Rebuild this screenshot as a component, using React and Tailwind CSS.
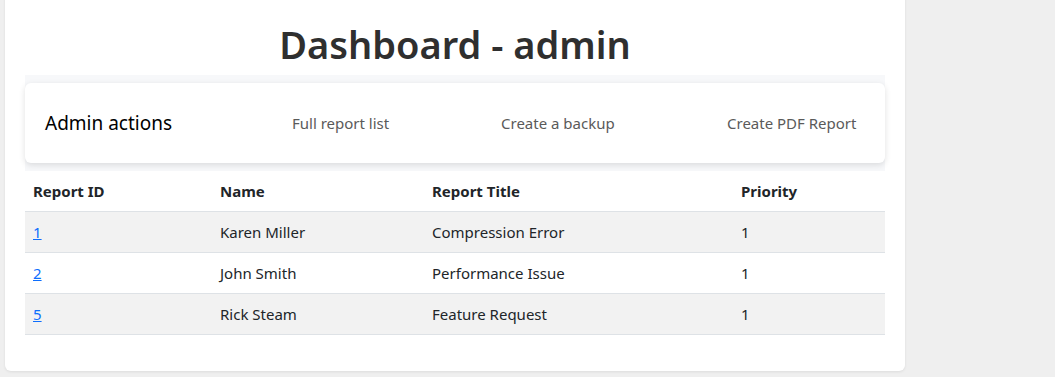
const rows = [
  { id: 1, name: 'Karen Miller', title: 'Compression Error', priority: 1 },
  { id: 2, name: 'John Smith', title: 'Performance Issue', priority: 1 },
  { id: 5, name: 'Rick Steam', title: 'Feature Request', priority: 1 },
]

export default function App() {
  return (
    <div
      className="min-h-[385px] bg-[#efefef] pl-[5px]"
      style={{ fontFamily: '"Noto Sans", "Open Sans", sans-serif' }}
    >
      <div className="-mt-2 w-[900px] rounded-md bg-white px-5 pt-[30px] pb-[36px] text-[#212529] shadow-[0_1px_3px_rgba(0,0,0,0.08)]">
        <h1 className="mb-2 text-center text-[38px] leading-[45px] font-semibold text-[#2f2f2f]">
          Dashboard - admin
        </h1>

        <div className="bg-[#f7f8fa] py-2">
          <div className="flex h-20 items-center rounded-md bg-white pl-5 shadow-[0_2px_6px_rgba(0,0,0,0.12)]">
            <span className="w-[247px] text-[19px] text-black">Admin actions</span>
            <a className="w-[209px] text-[15px] text-[#5a5a5a]">Full report list</a>
            <a className="w-[226px] text-[15px] text-[#5a5a5a]">Create a backup</a>
            <a className="text-[15px] text-[#5a5a5a]">Create PDF Report</a>
          </div>
        </div>

        <table className="w-full border-collapse text-[15px] leading-6">
          <thead>
            <tr className="border-b border-[#dee2e6]">
              <th className="w-[187px] px-2 py-2 text-left font-bold">Report ID</th>
              <th className="w-[212px] px-2 py-2 text-left font-bold">Name</th>
              <th className="w-[309px] px-2 py-2 text-left font-bold">Report Title</th>
              <th className="px-2 py-2 text-left font-bold">Priority</th>
            </tr>
          </thead>
          <tbody>
            {rows.map((r, i) => (
              <tr
                key={r.id}
                className={`border-b border-[#dee2e6] ${i % 2 === 0 ? 'bg-[#f2f2f2]' : 'bg-white'}`}
              >
                <td className="px-2 py-2">
                  <a href="#" className="text-[#0d6efd] underline">
                    {r.id}
                  </a>
                </td>
                <td className="px-2 py-2">{r.name}</td>
                <td className="px-2 py-2">{r.title}</td>
                <td className="px-2 py-2">{r.priority}</td>
              </tr>
            ))}
          </tbody>
        </table>
      </div>
    </div>
  )
}
